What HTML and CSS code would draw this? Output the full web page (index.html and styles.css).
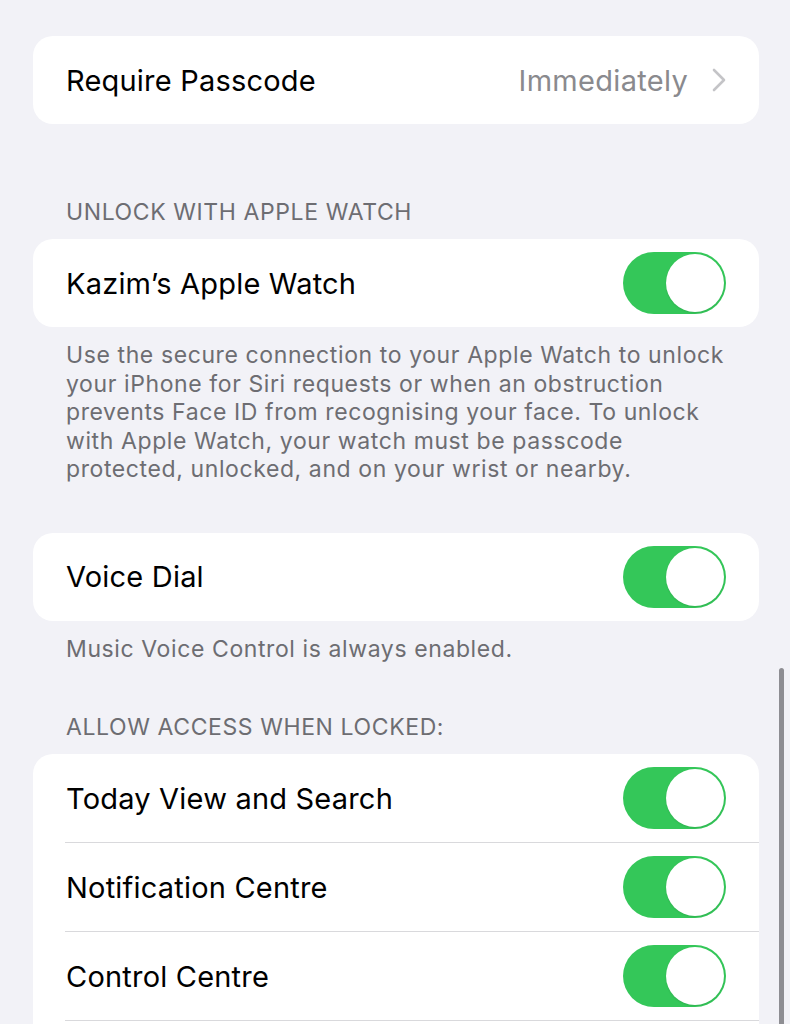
FILE: index.html
```html
<!DOCTYPE html>
<html>
<head>
<meta charset="utf-8">
<link rel="stylesheet" href="styles.css">
</head>
<body>
<div class="page">
  <div class="card card-first">
    <div class="row">
      <span class="label">Require Passcode</span>
      <span class="value">Immediately
        <svg class="chev" width="14" height="24" viewBox="0 0 14 24"><polyline points="2,2 12,12 2,22" fill="none" stroke="#c4c4c7" stroke-width="2.6" stroke-linecap="round" stroke-linejoin="round"/></svg>
      </span>
    </div>
  </div>

  <div class="header header-a">UNLOCK WITH APPLE WATCH</div>
  <div class="card">
    <div class="row">
      <span class="label">Kazim’s Apple Watch</span>
      <span class="toggle"><span class="knob"></span></span>
    </div>
  </div>
  <div class="footer footer-a">Use the secure connection to your Apple Watch to unlock your iPhone for Siri requests or when an obstruction prevents Face ID from recognising your face. To unlock with Apple Watch, your watch must be passcode protected, unlocked, and on your wrist or nearby.</div>

  <div class="card">
    <div class="row">
      <span class="label">Voice Dial</span>
      <span class="toggle"><span class="knob"></span></span>
    </div>
  </div>
  <div class="footer footer-b">Music Voice Control is always enabled.</div>

  <div class="header header-b">ALLOW ACCESS WHEN LOCKED:</div>
  <div class="card card-list">
    <div class="row sep">
      <span class="label">Today View and Search</span>
      <span class="toggle"><span class="knob"></span></span>
    </div>
    <div class="row sep">
      <span class="label">Notification Centre</span>
      <span class="toggle"><span class="knob"></span></span>
    </div>
    <div class="row sep">
      <span class="label">Control Centre</span>
      <span class="toggle"><span class="knob"></span></span>
    </div>
  </div>
</div>
<div class="scrollbar"></div>
</body>
</html>
```

FILE: styles.css
```css
html, body {
  margin: 0;
  padding: 0;
  background: #f2f2f7;
  height: 1024px;
  overflow: hidden;
}
body {
  font-family: Inter, "Noto Sans", sans-serif;
  -webkit-font-smoothing: antialiased;
  position: relative;
}
.page {
  padding: 36px 31px 0 33px;
}
.card {
  background: #ffffff;
  border-radius: 20px;
  overflow: hidden;
}
.card-list {
  padding-bottom: 40px;
}
.row {
  height: 88px;
  display: flex;
  align-items: center;
  justify-content: space-between;
  padding: 0 33px;
  box-sizing: border-box;
  position: relative;
}
.row.sep {
  height: 89px;
  border-bottom: 1px solid #d9d9dc;
  margin-left: 32px;
  padding-left: 1px;
}
.label {
  font-size: 29px;
  color: #000;
  letter-spacing: 0.2px;
}
.value {
  font-size: 29px;
  color: #8a8a8e;
  display: flex;
  align-items: center;
  gap: 24px;
  letter-spacing: 0.3px;
}
.chev {
  display: block;
}
.toggle {
  width: 103px;
  height: 62px;
  border-radius: 31px;
  background: #34c759;
  position: relative;
  flex: none;
}
.knob {
  position: absolute;
  right: 2px;
  top: 2px;
  width: 58px;
  height: 58px;
  border-radius: 50%;
  background: #fff;
  box-shadow: 0 1px 2px rgba(0,0,0,0.1);
}
.header {
  font-size: 23px;
  line-height: 28px;
  color: #6d6d72;
  padding-left: 33px;
  letter-spacing: 0.6px;
}
.header-a {
  margin-top: 74px;
  margin-bottom: 13px;
}
.header-b {
  margin-top: 50px;
  margin-bottom: 13px;
}
.footer {
  font-size: 23px;
  line-height: 28.5px;
  color: #6d6d72;
  padding: 0 14px 0 33px;
  margin-top: 14px;
  letter-spacing: 0.6px;
}
.footer-a {
  margin-bottom: 49px;
}
.scrollbar {
  position: absolute;
  left: 779px;
  top: 668px;
  width: 5px;
  height: 400px;
  border-radius: 3px;
  background: #8e8e93;
}
```
